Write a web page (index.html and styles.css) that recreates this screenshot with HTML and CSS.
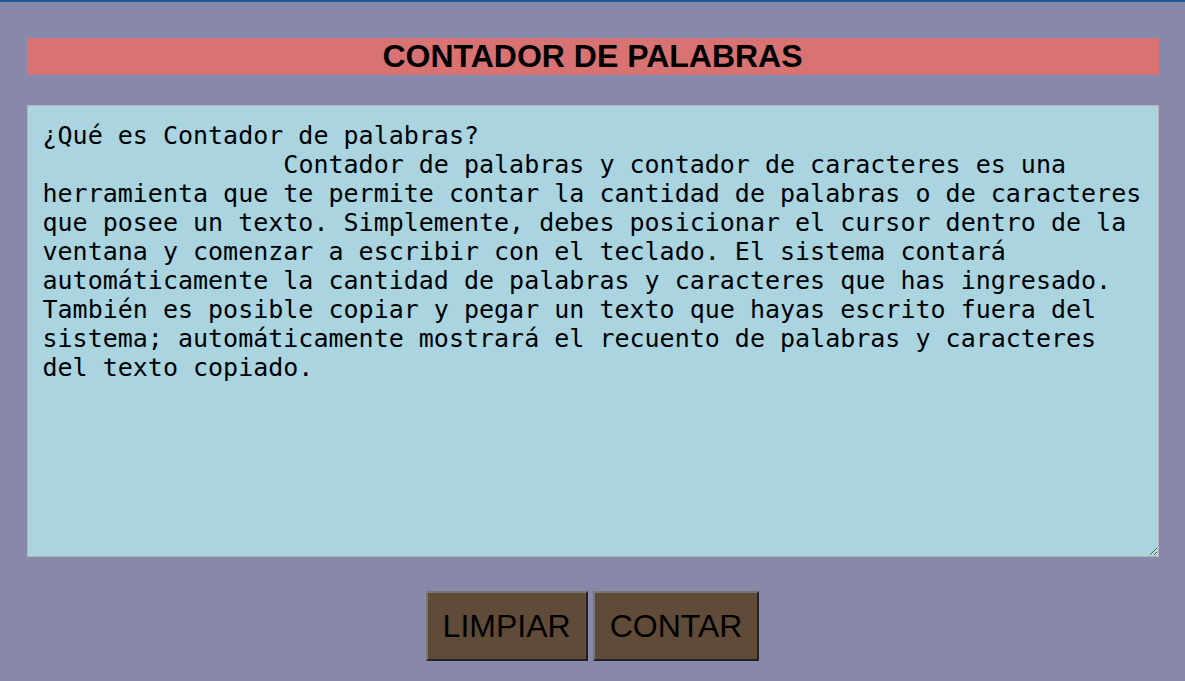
FILE: index.html
```html
<!DOCTYPE html>
<html lang="es">
<head>
<meta charset="utf-8">
<title>Contador de palabras</title>
<link rel="stylesheet" href="styles.css">
</head>
<body>
<main class="page">
  <h1 class="title">CONTADOR DE PALABRAS</h1>
  <textarea class="editor">¿Qué es Contador de palabras?
                Contador de palabras y contador de caracteres es una herramienta que te permite contar la cantidad de palabras o de caracteres que posee un texto. Simplemente, debes posicionar el cursor dentro de la ventana y comenzar a escribir con el teclado. El sistema contará automáticamente la cantidad de palabras y caracteres que has ingresado. También es posible copiar y pegar un texto que hayas escrito fuera del sistema; automáticamente mostrará el recuento de palabras y caracteres del texto copiado.</textarea>
  <div class="actions">
    <button class="btn" type="button">LIMPIAR</button>
    <button class="btn" type="button">CONTAR</button>
  </div>
</main>
</body>
</html>
```

FILE: styles.css
```css
html, body {
  margin: 0;
  padding: 0;
}
body {
  background: #8888aa;
  border-top: 2px solid #1e5799;
  min-height: 679px;
  font-family: "Liberation Sans", Arial, sans-serif;
}
.page {
  width: 1132px;
  margin: 0 auto;
  padding-top: 36px;
  display: flex;
  flex-direction: column;
}
.title {
  margin: 0;
  height: 37px;
  background: #d97373;
  color: #000;
  font-size: 32px;
  font-weight: bold;
  line-height: 37px;
  text-align: center;
}
.editor {
  margin-top: 30px;
  box-sizing: border-box;
  width: 1132px;
  height: 452px;
  padding: 15px 15px 14px;
  background: #a9d4e0;
  border: 1px solid #b5b5b5;
  color: #000;
  font-family: "DejaVu Sans Mono", monospace;
  font-size: 25px;
  outline: none;
  resize: both;
}
.actions {
  margin-top: 34px;
  display: flex;
  justify-content: center;
  gap: 5px;
}
.btn {
  height: 70px;
  padding: 0 15px;
  background: #5f4b37;
  color: #000;
  font-family: "Liberation Sans", Arial, sans-serif;
  font-size: 32px;
  border: 2px solid;
  border-color: #777777 #222222 #222222 #777777;
}
```
